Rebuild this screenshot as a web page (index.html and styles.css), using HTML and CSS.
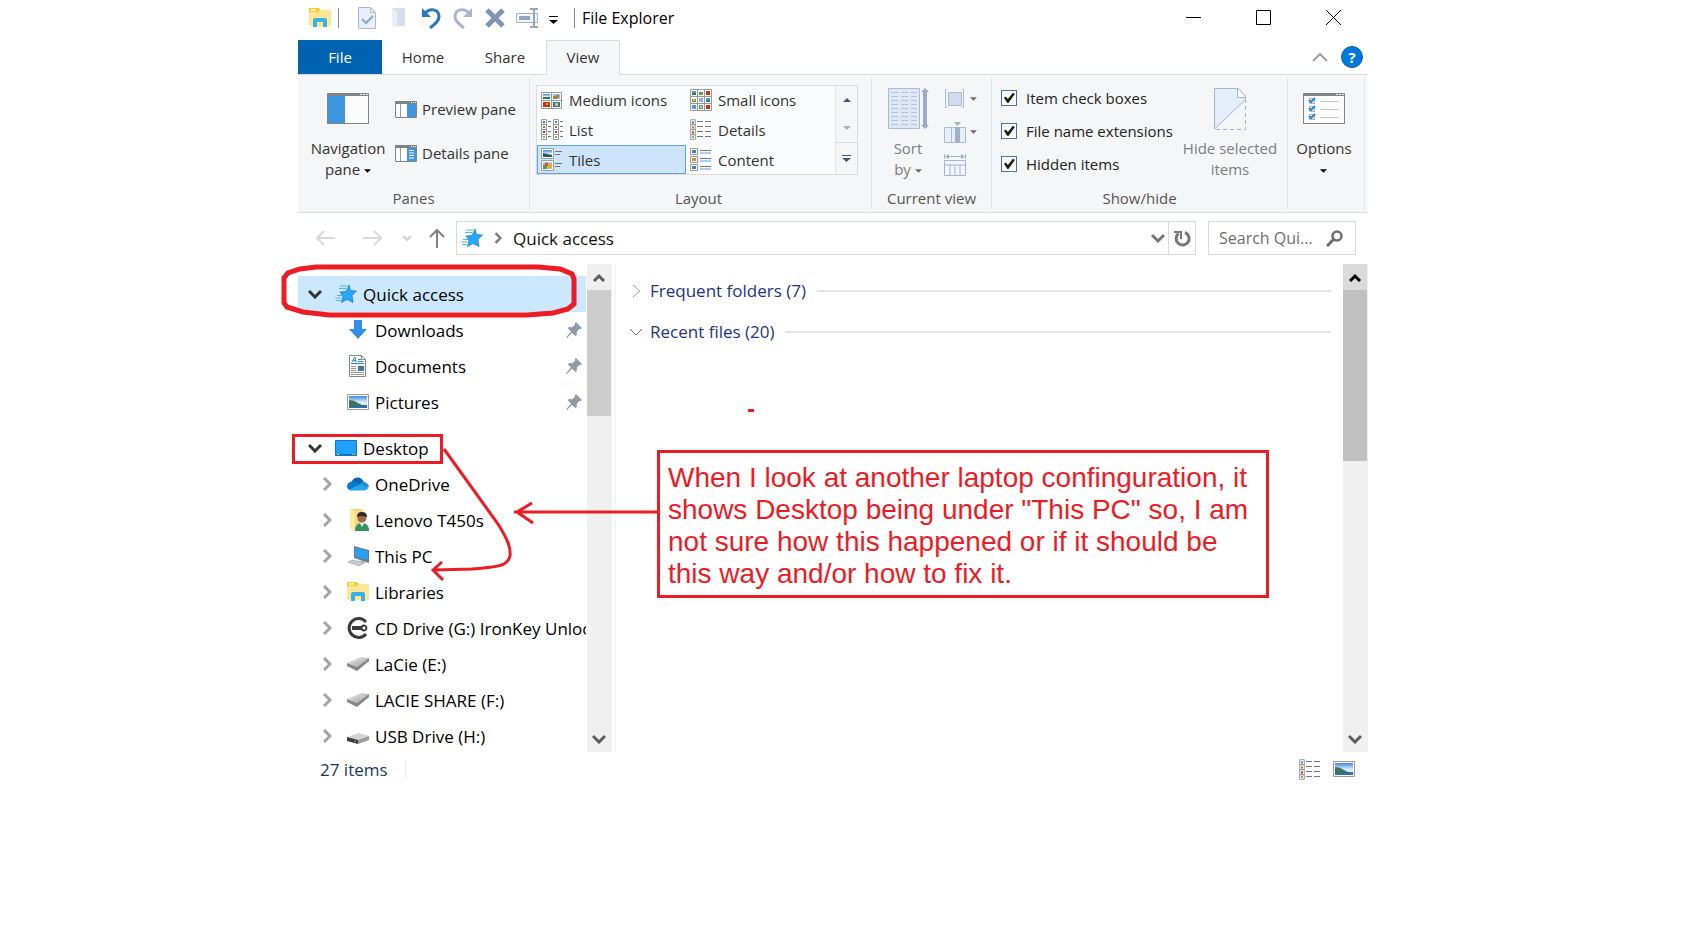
FILE: index.html
```html
<!DOCTYPE html>
<html lang="en">
  <head>
    <meta charset="utf-8">
    <title>File Explorer</title>
    <link rel="stylesheet" href="styles.css">
  </head>
  <body>

    <!-- shared icons -->
    <svg class="defs" aria-hidden="true">
      <linearGradient id="sky" x1="0" y1="0" x2="0" y2="1">
        <stop offset="0" stop-color="#3f86e0"/>
        <stop offset="0.5" stop-color="#d3ecfa"/>
      </linearGradient>
      <linearGradient id="metal" x1="0" y1="0" x2="1" y2="1">
        <stop offset="0" stop-color="#f0f0f0"/>
        <stop offset="1" stop-color="#9c9c9c"/>
      </linearGradient>
      <symbol id="folder" viewBox="0 0 22 20">
        <path d="M0 0h10l2 2v3H0z" fill="#ffc928"/>
        <path d="M2 1h5v2H2z" fill="#fff3c4"/>
        <path d="M0 4h9l2-2h11v16H0z" fill="#ffe694"/>
        <path d="M4 19v-7q0-2 2-2h10q2 0 2 2v7h-4v-5H8v5z" fill="#39b1e6"/>
      </symbol>
      <symbol id="star" viewBox="0 0 22 18">
        <path d="M14 0l1.500 5.500L21.500 6 17 10.500l1 7-6-3-5.500 3 1.500-6.500L5 7l6-.5z" fill="#27a7f5" stroke="#1579c9" stroke-width=".7"/>
        <path d="M5 1h7M4 3.500h7M2 10.500h5M0 13h6M1 15.500h5" stroke="#4db6f0" stroke-width="1"/>
      </symbol>
      <symbol id="photo" viewBox="0 0 22 16">
        <path d="M.5.5h21v15H.5z" fill="#fff" stroke="#9a9a9a"/>
        <path d="M2 2h18v12H2z" fill="url(#sky)"/>
        <path d="M2 6q5 0 9 3t9 2v1H2z" fill="#3f7358"/>
        <path d="M2 11.500h18V14H2z" fill="#2f6f9c"/>
      </symbol>
      <symbol id="down" viewBox="0 0 14 10">
        <path d="M1 2l6 6 6-6" fill="none" stroke="currentColor" stroke-width="3"/>
      </symbol>
      <symbol id="right" viewBox="0 0 10 14">
        <path d="M2 1l6 6-6 6" fill="none" stroke="currentColor" stroke-width="3"/>
      </symbol>
      <symbol id="caret" viewBox="0 0 8 4">
        <path d="M0 0h8L4 4z" fill="currentColor"/>
      </symbol>
      <symbol id="pin" viewBox="0 0 16 16">
        <path d="M10 0l6 6-1.500 1.200-1-.4-2.800 3 .2 3L9.500 14 6 10.800 1 16l-1-.6 5-5.800L1.800 6.500 3 5l3.400.2L9.200 2.400 8.800 1.200z" fill="#8f9ba6"/>
      </symbol>
      <symbol id="drive" viewBox="0 0 22 16">
        <path d="M0 7L14 1l8 1-12 9z" fill="url(#metal)"/>
        <path d="M0 7l10 4L22 2v3L10 15 0 10z" fill="#858585"/>
      </symbol>
      <symbol id="details" viewBox="0 0 22 21">
        <path d="M.7.700h4.600v5H.7zM.7 5.700h4.600v5H.7zM.7 10.700h4.600v5H.7zM.7 15.700h4.600v4.600H.7z" fill="#fff" stroke="#9a9a9a"/>
        <path d="M2 2.500h2v2H2z" fill="#2b82c4"/>
        <path d="M2 7.500h2v2H2z" fill="#9a7b25"/>
        <path d="M2 12.500h2v2H2z" fill="#c3301c"/>
        <path d="M2 17h2v2H2z" fill="#7fb069"/>
        <path d="M7 2.500h6M15 2.500h6M7 7.500h6M15 7.500h6M7 12.500h6M15 12.500h6M7 17.500h6M15 17.500h6" stroke="#777"/>
      </symbol>
      <symbol id="frame" viewBox="0 0 42 31">
        <path d="M.5.500h41v30H.5z" fill="#fcfcfc" stroke="#808385"/>
        <path d="M0 0h42v3H0z" fill="#808385"/>
        <path d="M33 1h2v1h-2zM36 1h2v1h-2zM39 1h2v1h-2z" fill="#fff"/>
      </symbol>
      <symbol id="smallframe" viewBox="0 0 22 17">
        <path d="M.5.500h21v16H.5z" fill="#fff" stroke="#808385"/>
        <path d="M0 0h22v3H0z" fill="#808385"/>
        <path d="M16 1h1v1h-1zM18 1h1v1h-1zM20 1h1v1h-1z" fill="#fff"/>
        <path d="M5.500 3v13" stroke="#9a9a9a"/>
        <path d="M12 3h9v13h-9z" fill="#3d97e0"/>
      </symbol>
    </svg>

    <div class="window">

      <header class="titlebar">
        <svg class="app-icon" width="22" height="20"><use href="#folder"/></svg>
        <span class="bar"></span>
        <div class="quick">
          <button aria-label="Properties">
            <svg width="18" height="22" viewBox="0 0 18 22"><path d="M.5.500h12l5 5v16H.5z" fill="#e8effa" stroke="#a9b9d4"/><path d="M12.500.500v5h5" fill="none" stroke="#a9b9d4"/><path d="M4 12l4 4 7-7" fill="none" stroke="#92a5c6" stroke-width="2"/></svg>
          </button>
          <button aria-label="New folder">
            <svg width="16" height="20" viewBox="0 0 16 20"><path d="M1 0h13v18H1z" fill="#d5dfee"/><path d="M1 0l5 4v16l-5-2z" fill="#e8eff9"/></svg>
          </button>
          <button aria-label="Undo">
            <svg width="20" height="22" viewBox="0 0 20 22"><path d="M3 7c6-7 15-5 15 3 0 4-4 7-9 11" fill="none" stroke="#2a78c0" stroke-width="3"/><path d="M1 1v9h9z" fill="#2a78c0"/></svg>
          </button>
          <button aria-label="Redo">
            <svg width="20" height="22" viewBox="0 0 20 22"><path d="M17 7C11 0 2 2 2 10c0 4 4 7 9 11" fill="none" stroke="#a9b6cb" stroke-width="3"/><path d="M19 1v9h-9z" fill="#a9b6cb"/></svg>
          </button>
          <button aria-label="Delete">
            <svg width="20" height="20" viewBox="0 0 20 20"><path d="M2 2l16 16M18 2L2 18" stroke="#8193b2" stroke-width="5"/></svg>
          </button>
          <button aria-label="Rename">
            <svg width="22" height="20" viewBox="0 0 22 20"><path d="M.5 5.500h21v9H.5z" fill="#f4f7fc" stroke="#a3b2cc"/><path d="M3 8h11v4H3z" fill="#93a5c4"/><path d="M14 1h3l1 1 1-1h3M18 2v16M14 19h3l1-1 1 1h3" fill="none" stroke="#93a5c4" stroke-width="2"/></svg>
          </button>
        </div>
        <button class="customize" aria-label="Customize">
          <svg width="9" height="8" viewBox="0 0 9 8"><path d="M0 .500h9" stroke="#000"/><path d="M0 4h9L4.500 8z"/></svg>
        </button>
        <span class="bar"></span>
        <h1 class="title">File Explorer</h1>
        <div class="controls">
          <button aria-label="Minimize"><svg width="16" height="16"><path d="M0 7.500h15" stroke="#000"/></svg></button>
          <button aria-label="Maximize"><svg width="16" height="16"><path d="M.5.500h14v14H.5z" fill="none" stroke="#000"/></svg></button>
          <button aria-label="Close"><svg width="16" height="16"><path d="M0 0l15 15M15 0L0 15" stroke="#000"/></svg></button>
        </div>
      </header>

      <nav class="tabs">
        <button class="tab file">File</button>
        <button class="tab">Home</button>
        <button class="tab">Share</button>
        <button class="tab active">View</button>
        <div class="help">
          <button aria-label="Collapse ribbon"><svg width="16" height="10"><path d="M1 9l7-7 7 7" fill="none" stroke="#a0a0a0" stroke-width="2"/></svg></button>
          <button class="help-btn" aria-label="Help">?</button>
        </div>
      </nav>

      <div class="ribbon">
        <section class="group panes">
          <div class="group-body">
            <button class="big">
              <svg width="42" height="31"><use href="#frame"/><path d="M1 3h17v27H1z" fill="#3d97e0"/></svg>
              <span>Navigation<br>pane <svg class="caret" width="7" height="4"><use href="#caret"/></svg></span>
            </button>
            <div class="pane-list">
              <button><svg width="22" height="17"><use href="#smallframe"/></svg>Preview pane</button>
              <button><svg width="22" height="17"><use href="#smallframe"/><path d="M14 5.500h5M14 8h5M14 10.500h5M14 13h5" stroke="#fff"/></svg>Details pane</button>
            </div>
          </div>
          <h2>Panes</h2>
        </section>

        <section class="group layout">
          <div class="gallery">
            <div class="views">
              <button>
                <svg width="22" height="22"><path d="M.500 3.500h20v16h-20zM10.500 3.500v16M.500 11.500h20" fill="#fff" stroke="#9a9a9a"/><path d="M2 5h7v5H2z" fill="url(#sky)"/><path d="M2 8h7v2H2z" fill="#35705c"/><path d="M12 5h7v5h-7z" fill="#8ec3e8"/><path d="M12 7h4v3h-4z" fill="#63a043"/><path d="M15 6h3v3h-3z" fill="#e0613a"/><path d="M2 13h7v5H2z" fill="#c8301b"/><path d="M5 14h2v2H5z" fill="#f5b32e"/><path d="M12 13h7v5h-7z" fill="#3175b8"/><path d="M14 14h3v3h-3z" fill="#eac22d"/></svg>
                Medium icons
              </button>
              <button>
                <svg width="22" height="22"><path d="M.500.500h21v21H.500zM7.500.500v21M14.500.500v21M.500 7.500h21M.500 14.500h21" fill="#fff" stroke="#9a9a9a"/><path d="M2 2h4v4H2zM9 16h4v4H9zM16 9h4v4h-4zM2 16h4v4H2z" fill="#4b9bd4"/><path d="M9 3h4v3H9zM2 10h4v3H2z" fill="#63a043"/><path d="M16 2h4v4h-4zM16 16h4v4h-4z" fill="#c8301b"/><path d="M9 9h4v4H9z" fill="#86b6dc"/><path d="M3 10h2v2H3zM10 17h2v2h-2z" fill="#eac22d"/><path d="M2 4h4v2H2zM17 11h3v2h-3z" fill="#35705c"/></svg>
                Small icons
              </button>
              <button>
                <svg width="22" height="22"><path d="M.500.500h5v20h-5zM12.500.500h5v20h-5zM.500 5.500h5M.500 10.500h5M.500 15.500h5M12.500 5.500h5M12.500 10.500h5M12.500 15.500h5" fill="#fff" stroke="#9a9a9a"/><path d="M2 2h2v2H2zM14 2h2v2h-2z" fill="#2b82c4"/><path d="M2 7h2v2H2zM14 7h2v2h-2z" fill="#9a7b25"/><path d="M2 12h2v2H2zM14 12h2v2h-2z" fill="#c3301c"/><path d="M2 17h2v2H2zM14 17h2v2h-2z" fill="#7fb069"/><path d="M7 2.500h3M19 2.500h3M7 7.500h3M19 7.500h3M7 12.500h3M19 12.500h3M7 17.500h3M19 17.500h3" stroke="#777"/></svg>
                List
              </button>
              <button>
                <svg width="22" height="21"><use href="#details"/></svg>
                Details
              </button>
              <button class="selected">
                <svg width="22" height="23"><path d="M.500.500h12v10H.500zM.500 12.500h12v10H.500z" fill="#fff" stroke="#9a9a9a"/><path d="M2 2h9v7H2z" fill="url(#sky)"/><path d="M2 5l9 2v2H2z" fill="#285e63"/><path d="M2 14h9v7H2z" fill="#9cc9e8"/><path d="M2 17h4v4H2z" fill="#5b9c3c"/><path d="M4 15h3v3H4z" fill="#dc4c30"/><path d="M7 16h4v4H7z" fill="#e9a72c"/><path d="M14 3.500h7M14 6.500h5M14 15.500h7M14 18.500h5" stroke="#777"/></svg>
                Tiles
              </button>
              <button>
                <svg width="22" height="23"><path d="M.500.500h7v6h-7zM.500 8.500h7v6h-7zM.500 16.500h7v6h-7z" fill="#fff" stroke="#9a9a9a"/><path d="M2 2h4v3H2zM2 18h4v3H2z" fill="#3a86bb"/><path d="M2 10h4v3H2z" fill="#c3932c"/><path d="M10 2.500h11M10 10.500h11M10 18.500h11" stroke="#777"/><path d="M10 5h11M10 13h11M10 21h11" stroke="#5c9bf0"/></svg>
                Content
              </button>
            </div>
            <div class="gallery-scroll">
              <button aria-label="Row up"><svg width="8" height="4"><path d="M0 4h8L4 0z" fill="#46587a"/></svg></button>
              <button class="dim" aria-label="Row down"><svg width="8" height="4"><use href="#caret"/></svg></button>
              <button class="more" aria-label="More"><svg width="9" height="7"><path d="M0 .500h9" stroke="#46587a"/><path d="M0 3h9L4.500 7z" fill="#46587a"/></svg></button>
            </div>
          </div>
          <h2>Layout</h2>
        </section>

        <section class="group current">
          <div class="group-body">
            <button class="big dim sort">
              <svg width="41" height="41" viewBox="0 0 41 41"><path d="M.500.500h31v40H.500z" fill="#dfe8f6" stroke="#a9b9d6"/><path d="M3 4.500h26M3 8.500h26M3 12.500h26M3 16.500h26M3 20.500h26M3 24.500h26M3 28.500h26M3 32.500h26M3 36.500h26" stroke="#b3c2da" stroke-dasharray="7 3"/><path d="M35 4h4v33h-4zM33 4l4-4 4 4zM33 37l4 4 4-4z" fill="#9aabc9"/></svg>
              <span>Sort<br>by <svg class="caret" width="7" height="4"><use href="#caret"/></svg></span>
            </button>
            <div class="column-tools">
              <button aria-label="Group by"><svg width="22" height="22"><path d="M3 1.500H1.500v18H3M18 1.500h1.500v18H18" fill="none" stroke="#a9b9d6"/><path d="M4.500 4.500h13v13h-13z" fill="#cfdcee" stroke="#a9b9d6"/></svg><svg width="7" height="4"><use href="#caret"/></svg></button>
              <button aria-label="Add columns"><svg width="22" height="22"><path d="M.500 6.500h21v15H.500z" fill="#e6eefa" stroke="#a9b9d6"/><path d="M7.500 7v14" stroke="#a9b9d6"/><path d="M11 6h5v15h-5zM10 1h7l-3.500 4z" fill="#9fb0cd"/></svg><svg width="7" height="4"><use href="#caret"/></svg></button>
              <button aria-label="Size all columns to fit"><svg width="22" height="22"><path d="M.500 6.500h21v15H.500zM.500 11h21M6 11v10M11 11v10M16 11v10M.500 0v5M21.500 0v5M3 2.500h16" fill="none" stroke="#a3b3d0"/><path d="M1 2.500l4-2.500v5zM21 2.500l-4-2.500v5z" fill="#9fb0cd"/></svg></button>
            </div>
          </div>
          <h2>Current view</h2>
        </section>

        <section class="group showhide">
          <div class="group-body">
            <div class="checks">
              <label><input type="checkbox" checked>Item check boxes</label>
              <label><input type="checkbox" checked>File name extensions</label>
              <label><input type="checkbox" checked>Hidden items</label>
            </div>
            <button class="big dim">
              <svg width="32" height="42" viewBox="0 0 32 42"><path d="M.500.500h24l7 8v3L.500 41z" fill="#e6eefb" stroke="#a3b3d3"/><path d="M23.500.500v9h8" fill="#fff" stroke="#a3b3d3"/><path d="M31.500 11v30.500H1" fill="none" stroke="#a3b3d3" stroke-dasharray="4 3"/></svg>
              <span>Hide selected<br>items</span>
            </button>
          </div>
          <h2>Show/hide</h2>
        </section>

        <section class="group options">
          <button class="big">
            <svg width="42" height="31"><use href="#frame"/><path d="M6.500 5.500h5v5h-5zM6.500 13.500h5v5h-5zM6.500 21.500h5v5h-5z" fill="#fff" stroke="#b5b5b5"/><path d="M6 7l2 2 4-4M6 15l2 2 4-4M6 23l2 2 4-4" fill="none" stroke="#2288dd" stroke-width="2"/><path d="M17 8.500h19M17 16.500h19M17 24.500h19" stroke="#c8c8c8"/></svg>
            <span>Options<br><svg class="caret" width="7" height="4"><use href="#caret"/></svg></span>
          </button>
        </section>
      </div>

      <div class="addressbar">
        <div class="history">
          <button aria-label="Back"><svg width="20" height="16"><path d="M1 8h18M8 1L1 8l7 7" fill="none" stroke="#d9d9d9" stroke-width="2"/></svg></button>
          <button aria-label="Forward"><svg width="20" height="16"><path d="M1 8h18M12 1l7 7-7 7" fill="none" stroke="#d9d9d9" stroke-width="2"/></svg></button>
          <button class="recent" aria-label="Recent locations"><svg width="10" height="7"><path d="M1 1l4 4 4-4" fill="none" stroke="#d0d0d0" stroke-width="2"/></svg></button>
          <button aria-label="Up"><svg width="16" height="20"><path d="M8 20V2M1 9l7-7 7 7" fill="none" stroke="#808080" stroke-width="2"/></svg></button>
        </div>
        <div class="path">
          <svg width="22" height="18"><use href="#star"/></svg>
          <svg class="grey" width="8" height="12"><use href="#right"/></svg>
          <span>Quick access</span>
          <button class="grey" aria-label="Previous locations"><svg width="14" height="10"><use href="#down"/></svg></button>
          <button class="refresh" aria-label="Refresh"><svg width="17" height="17" viewBox="0 0 17 17"><path d="M11 2.500a6.500 6.500 0 1 1-6.500 1" fill="none" stroke="#777" stroke-width="3"/><path d="M0 1h8v8H6V3H0z" fill="#777"/></svg></button>
        </div>
        <div class="search">
          <input type="text" placeholder="Search Qui..." aria-label="Search Quick access">
          <svg width="17" height="17" viewBox="0 0 17 17"><circle cx="11" cy="6" r="4.500" fill="none" stroke="#6e6e6e" stroke-width="2.500"/><path d="M8 9l-7 7" stroke="#6e6e6e" stroke-width="3"/></svg>
        </div>
      </div>

      <div class="main">
        <ul class="tree">
          <li class="root current-item"><svg class="arrow"><use href="#down"/></svg><svg class="icon" viewBox="0 0 22 18"><use href="#star"/></svg>Quick access</li>
          <li><svg class="icon" viewBox="0 0 22 20"><path d="M7 0h8v9h5l-9 10L2 9h5z" fill="#3391e5"/></svg>Downloads<svg class="pin"><use href="#pin"/></svg></li>
          <li><svg class="icon" viewBox="0 0 22 22"><path d="M2.500.500h12l4 4v17h-16z" fill="#fff" stroke="#8a8a8a"/><path d="M14.500.500v4h4" fill="none" stroke="#8a8a8a"/><path d="M5 7l3-5 1 5M6 5.500h3M11 4.500h3M11 6.500h5M4 8.500h13" fill="none" stroke="#2b8ad0"/><path d="M4 11.500h5M4 13.500h5M4 15.500h5M4 17.500h13M4 19.500h13" stroke="#999"/><path d="M11 11h6v5h-6z" fill="#3b79a8"/></svg>Documents<svg class="pin"><use href="#pin"/></svg></li>
          <li><svg class="icon" viewBox="0 0 22 16"><use href="#photo"/></svg>Pictures<svg class="pin"><use href="#pin"/></svg></li>
          <li class="root second"><svg class="arrow"><use href="#down"/></svg><svg class="icon" viewBox="0 0 22 16"><path d="M.500.500h21v15H.500z" fill="#1fa0ff" stroke="#1173bd"/><path d="M1 14.500h20" stroke="#0b6db8"/><path d="M2 14.500h2M17 14.500h1M19 14.500h1" stroke="#fff"/></svg>Desktop</li>
          <li><svg class="arrow"><use href="#right"/></svg><svg class="icon" viewBox="0 0 24 16"><path d="M5 7a6 6 0 0 1 6-6q4-1 7 4l-6 6z" fill="#0a62b8"/><path d="M8 5q3 1 6 4L4 15q-4-1-4-5 1-5 8-5z" fill="#0b78d0"/><path d="M14 8q4-5 7-1 3 1 3 4l-5 3z" fill="#1490df"/><path d="M2 14l11-5q2-2 4 0l6 4q-1 2-4 2H5q-2 0-3-1z" fill="#27a5ea"/></svg>OneDrive</li>
          <li><svg class="arrow"><use href="#right"/></svg><svg class="icon" viewBox="0 0 22 22"><path d="M3 0h13v20H3z" fill="#f6d67a"/><path d="M3 0l5 3v19l-5-2z" fill="#ffe9a6"/><circle cx="15" cy="9" r="4.500" fill="#9a6b4f"/><path d="M10 8q0-5 5-5t5 5q-5-2-10 0z" fill="#2f2925"/><path d="M8 22q0-8 7-8t7 8z" fill="#37905f"/><path d="M13 14h4l-2 4z" fill="#fff"/></svg>Lenovo T450s</li>
          <li><svg class="arrow"><use href="#right"/></svg><svg class="icon" viewBox="0 0 22 20"><path d="M7 0l15 4v13L7 12z" fill="#6f7b86"/><path d="M8 1.500l13 3.500v9L8 10.500z" fill="#25a0f2"/><path d="M1 16l5-2 11 3-5 3z" fill="#c5ccd3" stroke="#8d979f" stroke-width=".6"/><path d="M11 14l9 2-3 1z" fill="#9aa4ac"/></svg>This PC</li>
          <li><svg class="arrow"><use href="#right"/></svg><svg class="icon" viewBox="0 0 22 20"><use href="#folder"/></svg>Libraries</li>
          <li><svg class="arrow"><use href="#right"/></svg><svg class="icon" viewBox="0 0 22 22"><path d="M19 5A9.500 9.500 0 1 0 19 17" fill="none" stroke="#3b3b3b" stroke-width="3"/><path d="M5 9h9a3.500 3.500 0 1 1 0 4H5z" fill="#3b3b3b"/><circle cx="17" cy="11" r="1.500" fill="#fff"/></svg>CD Drive (G:) IronKey Unlocker</li>
          <li><svg class="arrow"><use href="#right"/></svg><svg class="icon" viewBox="0 0 22 16"><use href="#drive"/></svg>LaCie (E:)</li>
          <li><svg class="arrow"><use href="#right"/></svg><svg class="icon" viewBox="0 0 22 16"><use href="#drive"/></svg>LACIE SHARE (F:)</li>
          <li><svg class="arrow"><use href="#right"/></svg><svg class="icon" viewBox="0 0 22 16"><path d="M0 9l12-4 10 3-11 4z" fill="#d4d4d4"/><path d="M0 9l11 3v4L0 13z" fill="#3c3c3c"/><path d="M11 12l11-4v4l-11 4z" fill="#9c9c9c"/><path d="M7 13h2v1H7z" fill="#3ed04a"/></svg>USB Drive (H:)</li>
        </ul>
        <div class="scrollbar tree-scroll">
          <button aria-label="Scroll up"><svg width="14" height="10"><path d="M2 9l5-5 5 5" fill="none" stroke="currentColor" stroke-width="3"/></svg></button>
          <div class="thumb"></div>
          <button aria-label="Scroll down"><svg width="14" height="10"><use href="#down"/></svg></button>
        </div>
        <div class="content">
          <h3><svg width="14" height="14"><path d="M4 1l7 6-7 6" fill="none" stroke="#a0a0a0"/></svg>Frequent folders (7)</h3>
          <h3><svg width="14" height="14"><path d="M1 4l6 6 6-6" fill="none" stroke="#707070"/></svg>Recent files (20)</h3>
        </div>
        <div class="scrollbar content-scroll">
          <button aria-label="Scroll up"><svg width="14" height="10"><path d="M2 9l5-5 5 5" fill="none" stroke="currentColor" stroke-width="3"/></svg></button>
          <div class="thumb"></div>
          <button aria-label="Scroll down"><svg width="14" height="10"><use href="#down"/></svg></button>
        </div>
      </div>

      <footer class="status">
        <span>27 items</span>
        <span class="status-sep"></span>
        <button aria-label="Details view"><svg width="22" height="21"><use href="#details"/></svg></button>
        <button aria-label="Large icons view"><svg width="22" height="16"><use href="#photo"/></svg></button>
      </footer>

      <!-- red pen marks drawn over the window -->
      <svg class="marks" viewBox="0 0 420 620" aria-hidden="true">
        <path d="M56 267H278l22 2 12 5 2 5v25l-6 5-15 4-26 2H69l-26-3-16-5-3-4V278l4-5 12-4z" stroke-width="5"/>
        <path d="M33.500 435.500h148v27h-148z"/>
        <path d="M184 449l54 75c10 16 13 24 12 32-3 12-18 11-38 13l-38 1M182 562l-9 8 10 10"/>
        <path d="M397 512H254M272 503l-15 9 16 11"/>
      </svg>
      <span class="dash"></span>
      <p class="note">When I look at another laptop confinguration, it shows Desktop being under "This PC" so, I am not sure how this happened or if it should be this way and/or how to fix it.</p>
    </div>

  </body>
</html>
```
FILE: styles.css
```css
*{
  box-sizing: border-box;
}
body{
  margin:0;
  padding:0 330px 0 298px;
  background-color: white;
  font-family: "Open Sans", "Noto Sans", sans-serif;
  font-size:17px;
  color:#333;
}
button{
  display:flex;
  align-items: center;
  justify-content: center;
  margin:0;
  padding:0;
  border:0;
  background:none;
  color:inherit;
  font:inherit;
}
h1, h2, h3, p, ul{
  margin:0;
  padding:0;
  font-weight: normal;
}
svg{
  display:block;
  flex:none;
}
.defs{
  position: absolute;
  width:0;
  height:0;
}
.window{
  position: relative;
  min-width:1070px;
}

/* title bar */
.titlebar{
  display:flex;
  align-items: center;
  height:40px;
  padding:0 26px 4px 11px;
}
.bar{
  width:1px;
  height:20px;
  margin:0 7px;
  background-color: #8a8a8a;
}
.quick{
  display:flex;
  gap:12px;
  margin-left:11px;
}
.quick button{
  width:20px;
}
.customize{
  margin:4px 9px 0 12px;
}
.title{
  color:#000;
  font-size:16px;
}
.controls{
  display:flex;
  gap:54px;
  margin-left:auto;
}

/* ribbon tabs */
.tabs{
  display:flex;
  height:35px;
  border-bottom:1px solid #dadbdc;
}
.tab{
  width:82px;
  font-size:15px;
}
.file{
  width:84px;
  height:34px;
  background-color: #0063b1;
  color:white;
}
.active{
  width:74px;
  height:35px;
  padding-bottom:2px;
  border:1px solid #dadbdc;
  border-bottom:0;
  background-color: #f5f6f7;
}
.help{
  display:flex;
  align-items: center;
  gap:13px;
  margin-left:auto;
  padding-right:5px;
}
.help-btn{
  width:22px;
  height:22px;
  border:1px solid #0a5fae;
  border-radius: 50%;
  background-color: #0078d7;
  color:white;
  font-size:15px;
  font-weight: bold;
}

/* ribbon */
.ribbon{
  display:flex;
  height:138px;
  padding:3px 0;
  border-bottom:1px solid #dadbdc;
  background-color: #f5f6f7;
  font-size:15px;
}
.group{
  display:flex;
  flex-direction: column;
  padding:10px 0 1px;
  border-right:1px solid #e2e3e4;
}
.group h2{
  margin-top:auto;
  color:#555;
  font-size:15px;
  line-height:20px;
  text-align: center;
}
.group-body{
  display:flex;
}
.panes{
  width:232px;
}
.layout{
  width:342px;
}
.current{
  width:120px;
}
.showhide{
  width:296px;
}
.options{
  width:77px;
}
.big{
  flex-direction: column;
  justify-content: space-between;
  height:92px;
  padding-top:5px;
  line-height:21px;
}
.panes .big{
  width:86px;
  margin-left:7px;
}
.options .big{
  margin-right:4px;
}
.caret{
  display:inline-block;
  color:#000;
  vertical-align: middle;
}
.dim{
  color:#7d7d7d;
}
.dim .caret{
  color:#6d6d6d;
}
.pane-list{
  display:flex;
  flex-direction: column;
  gap:24px;
  padding:11px 0 0 4px;
}
.pane-list button{
  gap:5px;
  height:20px;
  justify-content: flex-start;
}
.gallery{
  display:flex;
  height:90px;
  margin:-3px 13px 0 6px;
  border:1px solid #dadbdc;
  background-color: #fbfcfe;
}
.layout h2{
  padding-right:4px;
}
.views{
  display:grid;
  flex:1;
  grid-template-columns: 149px 149px;
  grid-template-rows: 28px 31px 29px;
}
.views button{
  gap:6px;
  justify-content: flex-start;
  padding-left:3px;
  border:1px solid transparent;
}
.views .selected{
  border-color:#62a2e4;
  background-color: #cde4fc;
}
.gallery-scroll{
  display:grid;
  width:22px;
  border-left:1px solid #e2e3e4;
  background-color: #f5f6f7;
}
.gallery-scroll .dim{
  color:#a9b1bf;
}
.gallery-scroll .more{
  border-top:1px solid #dadbdc;
}
.sort{
  width:50px;
  margin-left:11px;
  padding-top:0;
}
.column-tools{
  display:flex;
  flex-direction: column;
  gap:11px;
  margin-left:11px;
}
.column-tools button{
  gap:4px;
  justify-content: flex-start;
  color:#6d6d6d;
}
.checks{
  display:flex;
  flex-direction: column;
  gap:13px;
  padding-left:9px;
}
.checks label{
  display:flex;
  align-items: center;
  gap:9px;
  height:20px;
  white-space: nowrap;
  color:#222;
}
.checks input{
  appearance: none;
  width:16px;
  height:16px;
  margin:0;
  border:1px solid #4f6ea3;
  background-color: white;
}
.checks input:checked::before{
  content:"";
  display:block;
  height:14px;
  background-color: #1c1c1c;
  clip-path: polygon(14% 48%, 28% 40%, 42% 58%, 78% 12%, 92% 22%, 46% 86%, 38% 86%);
}
.showhide .big{
  margin-left:auto;
  width:118px;
  padding-top:0;
  white-space: nowrap;
}

/* address bar */
.addressbar{
  display:flex;
  height:51px;
  padding:8px 12px 9px 18px;
  color:#111;
}
.history{
  display:flex;
  align-items: center;
  gap:26px;
  width:140px;
}
.recent{
  margin:0 -9px 0 -6px;
}
.path{
  display:flex;
  flex:1;
  align-items: center;
  gap:11px;
  padding-left:4px;
  border:1px solid #d9d9d9;
}
.path .grey{
  color:#777;
}
.path button.grey{
  margin-left:auto;
  margin-right:-8px;
}
.refresh{
  width:27px;
  height:100%;
  border-left:1px solid #d9d9d9;
}
.search{
  display:flex;
  align-items: center;
  width:148px;
  margin-left:12px;
  padding:0 12px 0 10px;
  border:1px solid #d9d9d9;
}
.search input{
  flex:1;
  min-width:0;
  padding:0;
  border:0;
  outline:0;
  font:inherit;
  font-size:16px;
}
.search input::placeholder{
  color:#6d6d6d;
}

/* folder tree and content */
.main{
  display:flex;
  height:488px;
}
.tree{
  width:288px;
  padding-top:12px;
  overflow: hidden;
  list-style: none;
  white-space: nowrap;
  color:#000;
}
.tree li{
  display:flex;
  align-items: center;
  height:36px;
  padding-left:49px;
}
.tree .root{
  padding-left:10px;
}
.tree .second{
  margin-top:10px;
}
.tree .current-item{
  background-color: #cce8ff;
}
.icon{
  width:22px;
  height:22px;
  margin-right:6px;
}
.arrow{
  width:10px;
  height:14px;
  margin:0 15px 0 -25px;
  color:#a3a3a3;
}
.root .arrow{
  width:14px;
  height:10px;
  margin:0 13px 0 0;
  color:#333;
}
.pin{
  width:16px;
  height:16px;
  margin:0 4px 0 auto;
}
.scrollbar{
  display:flex;
  flex-direction: column;
  background-color: #f0f0f0;
  color:#5c5c5c;
}
.scrollbar button{
  height:26px;
  margin-right:1px;
}
.scrollbar button:last-child{
  margin-top:auto;
}
.tree-scroll{
  width:25px;
  margin-left:1px;
}
.thumb{
  height:126px;
  margin-right:1px;
  background-color: #cdcdcd;
}
.content-scroll{
  width:25px;
}
.content-scroll button:first-child{
  background-color: #dadada;
  color:#000;
}
.content-scroll .thumb{
  height:171px;
  background-color: #c0c0c0;
}
.content{
  flex:1;
  margin-left:2px;
  padding:6px 12px 0 13px;
  border-left:2px solid #f5f5f5;
}
.content h3{
  display:flex;
  align-items: center;
  gap:7px;
  height:41px;
  color:#1e3287;
  font-size:17px;
}
.content h3::after{
  content:"";
  flex:1;
  height:2px;
  margin-left:4px;
  background-color: #e3e3e3;
}
.status{
  display:flex;
  align-items: center;
  height:34px;
  padding:0 13px 0 22px;
  color:#1e395b;
}
.status-sep{
  width:1px;
  height:18px;
  margin:0 auto 0 17px;
  background-color: #e8e8e8;
}
.status button + button{
  margin-left:12px;
}

/* annotations */
.marks{
  position: absolute;
  left:-38px;
  top:0;
  width:420px;
  height:620px;
  fill:none;
  stroke:#ed1c24;
  stroke-width:3;
  pointer-events: none;
}
.dash{
  position: absolute;
  left:450px;
  top:409px;
  width:6px;
  height:3px;
  background-color: #ed1c24;
}
.note{
  position: absolute;
  left:359px;
  top:450px;
  width:612px;
  padding:9px 8px 5px;
  border:3px solid #ed1c24;
  color:#ed1c24;
  font-family: "Liberation Sans", Arial, sans-serif;
  font-size:28px;
  line-height:32px;
}
```
